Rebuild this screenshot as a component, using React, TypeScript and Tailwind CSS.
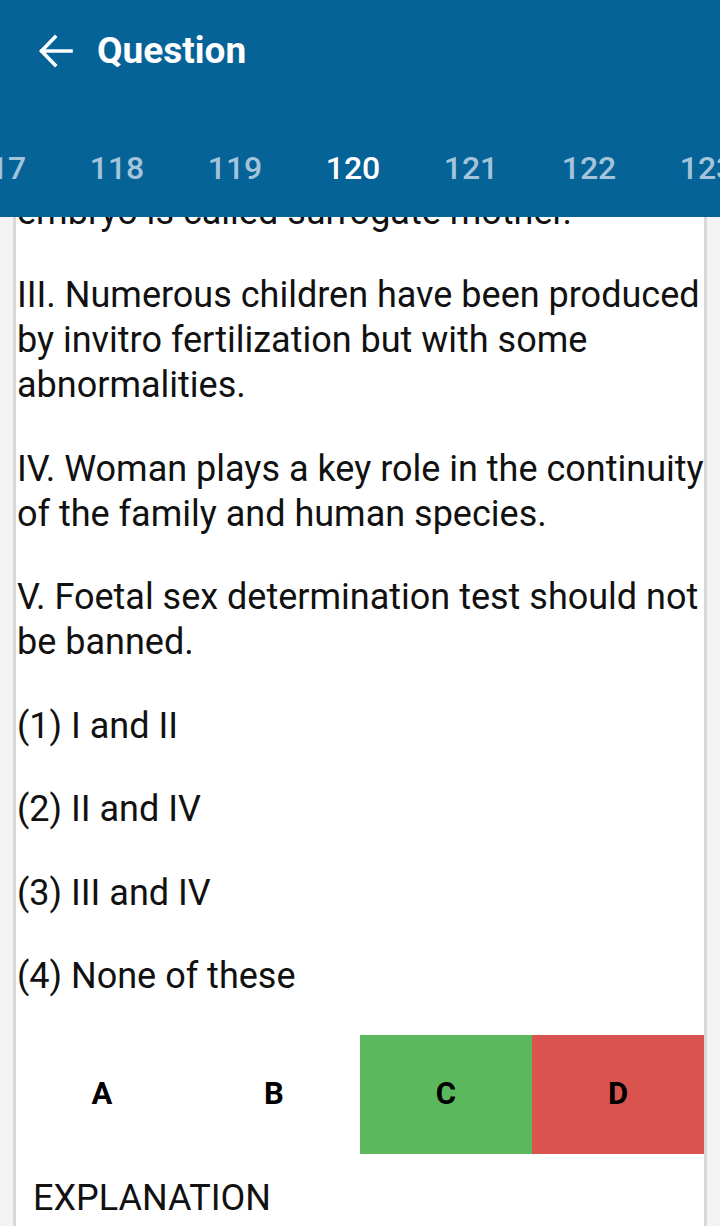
import React from 'react';

const TABS = [117, 118, 119, 120, 121, 122, 123];
const ACTIVE = 120;

const PARAS = [
  'III. Numerous children have been produced by invitro fertilization but with some abnormalities.',
  'IV. Woman plays a key role in the continuity of the family and human species.',
  'V. Foetal sex determination test should not be banned.',
  '(1) I and II',
  '(2) II and IV',
  '(3) III and IV',
  '(4) None of these',
];

function BackArrow() {
  return (
    <svg width="36" height="34" viewBox="0 0 36 34" fill="none" stroke="white" strokeWidth="3.6" strokeLinecap="square">
      <path d="M4 17 H33" />
      <path d="M17 3 L3.5 17 L17 31" strokeLinejoin="miter" />
    </svg>
  );
}

export default function App() {
  return (
    <div className="h-[1226px] w-[720px] flex flex-col overflow-hidden bg-[#f4f4f4]" style={{ fontFamily: 'Roboto, "Noto Sans", sans-serif' }}>
      {/* App bar + tabs */}
      <header className="relative z-10 h-[217px] shrink-0 bg-[#066398] overflow-hidden">
        <div className="flex items-center h-[101px] pl-[38px]">
          <BackArrow />
          <h1 className="ml-[23px] text-[37px] font-bold text-white leading-none">Question</h1>
        </div>
        <div className="flex -ml-[60px] mt-[51px]">
          {TABS.map((n) => (
            <div
              key={n}
              className={`w-[118px] shrink-0 text-center text-[32px] leading-none font-medium ${
                n === ACTIVE ? 'text-white' : 'text-[#a3c4da]'
              }`}
            >
              {n}
            </div>
          ))}
        </div>
      </header>

      {/* Question card */}
      <main className="flex-1 mx-[13px] bg-white border-x-[3px] border-[#d8d8d8] overflow-hidden">
        <div className="text-[36px] leading-[45px] text-[#111] -mt-[27px]">
          <p className="mb-[38px] pl-[1px] whitespace-nowrap">embryo is called surrogate mother.</p>
          {PARAS.map((t, i) => (
            <p key={i} className={`${i === PARAS.length - 1 ? 'mb-[36px]' : 'mb-[38.5px]'} pl-[1px]`}>
              {t}
            </p>
          ))}
        </div>

        <div className="grid grid-cols-4 h-[119px]">
          {['A', 'B', 'C', 'D'].map((l) => (
            <div
              key={l}
              className={`flex items-center justify-center text-[31px] font-bold text-black ${
                l === 'C' ? 'bg-[#5cb85c]' : l === 'D' ? 'bg-[#d9534f]' : ''
              }`}
            >
              {l}
            </div>
          ))}
        </div>

        <div className="mt-[22px] pl-[17px] text-[36px] leading-[45px] text-[#111]">EXPLANATION</div>
      </main>
    </div>
  );
}
